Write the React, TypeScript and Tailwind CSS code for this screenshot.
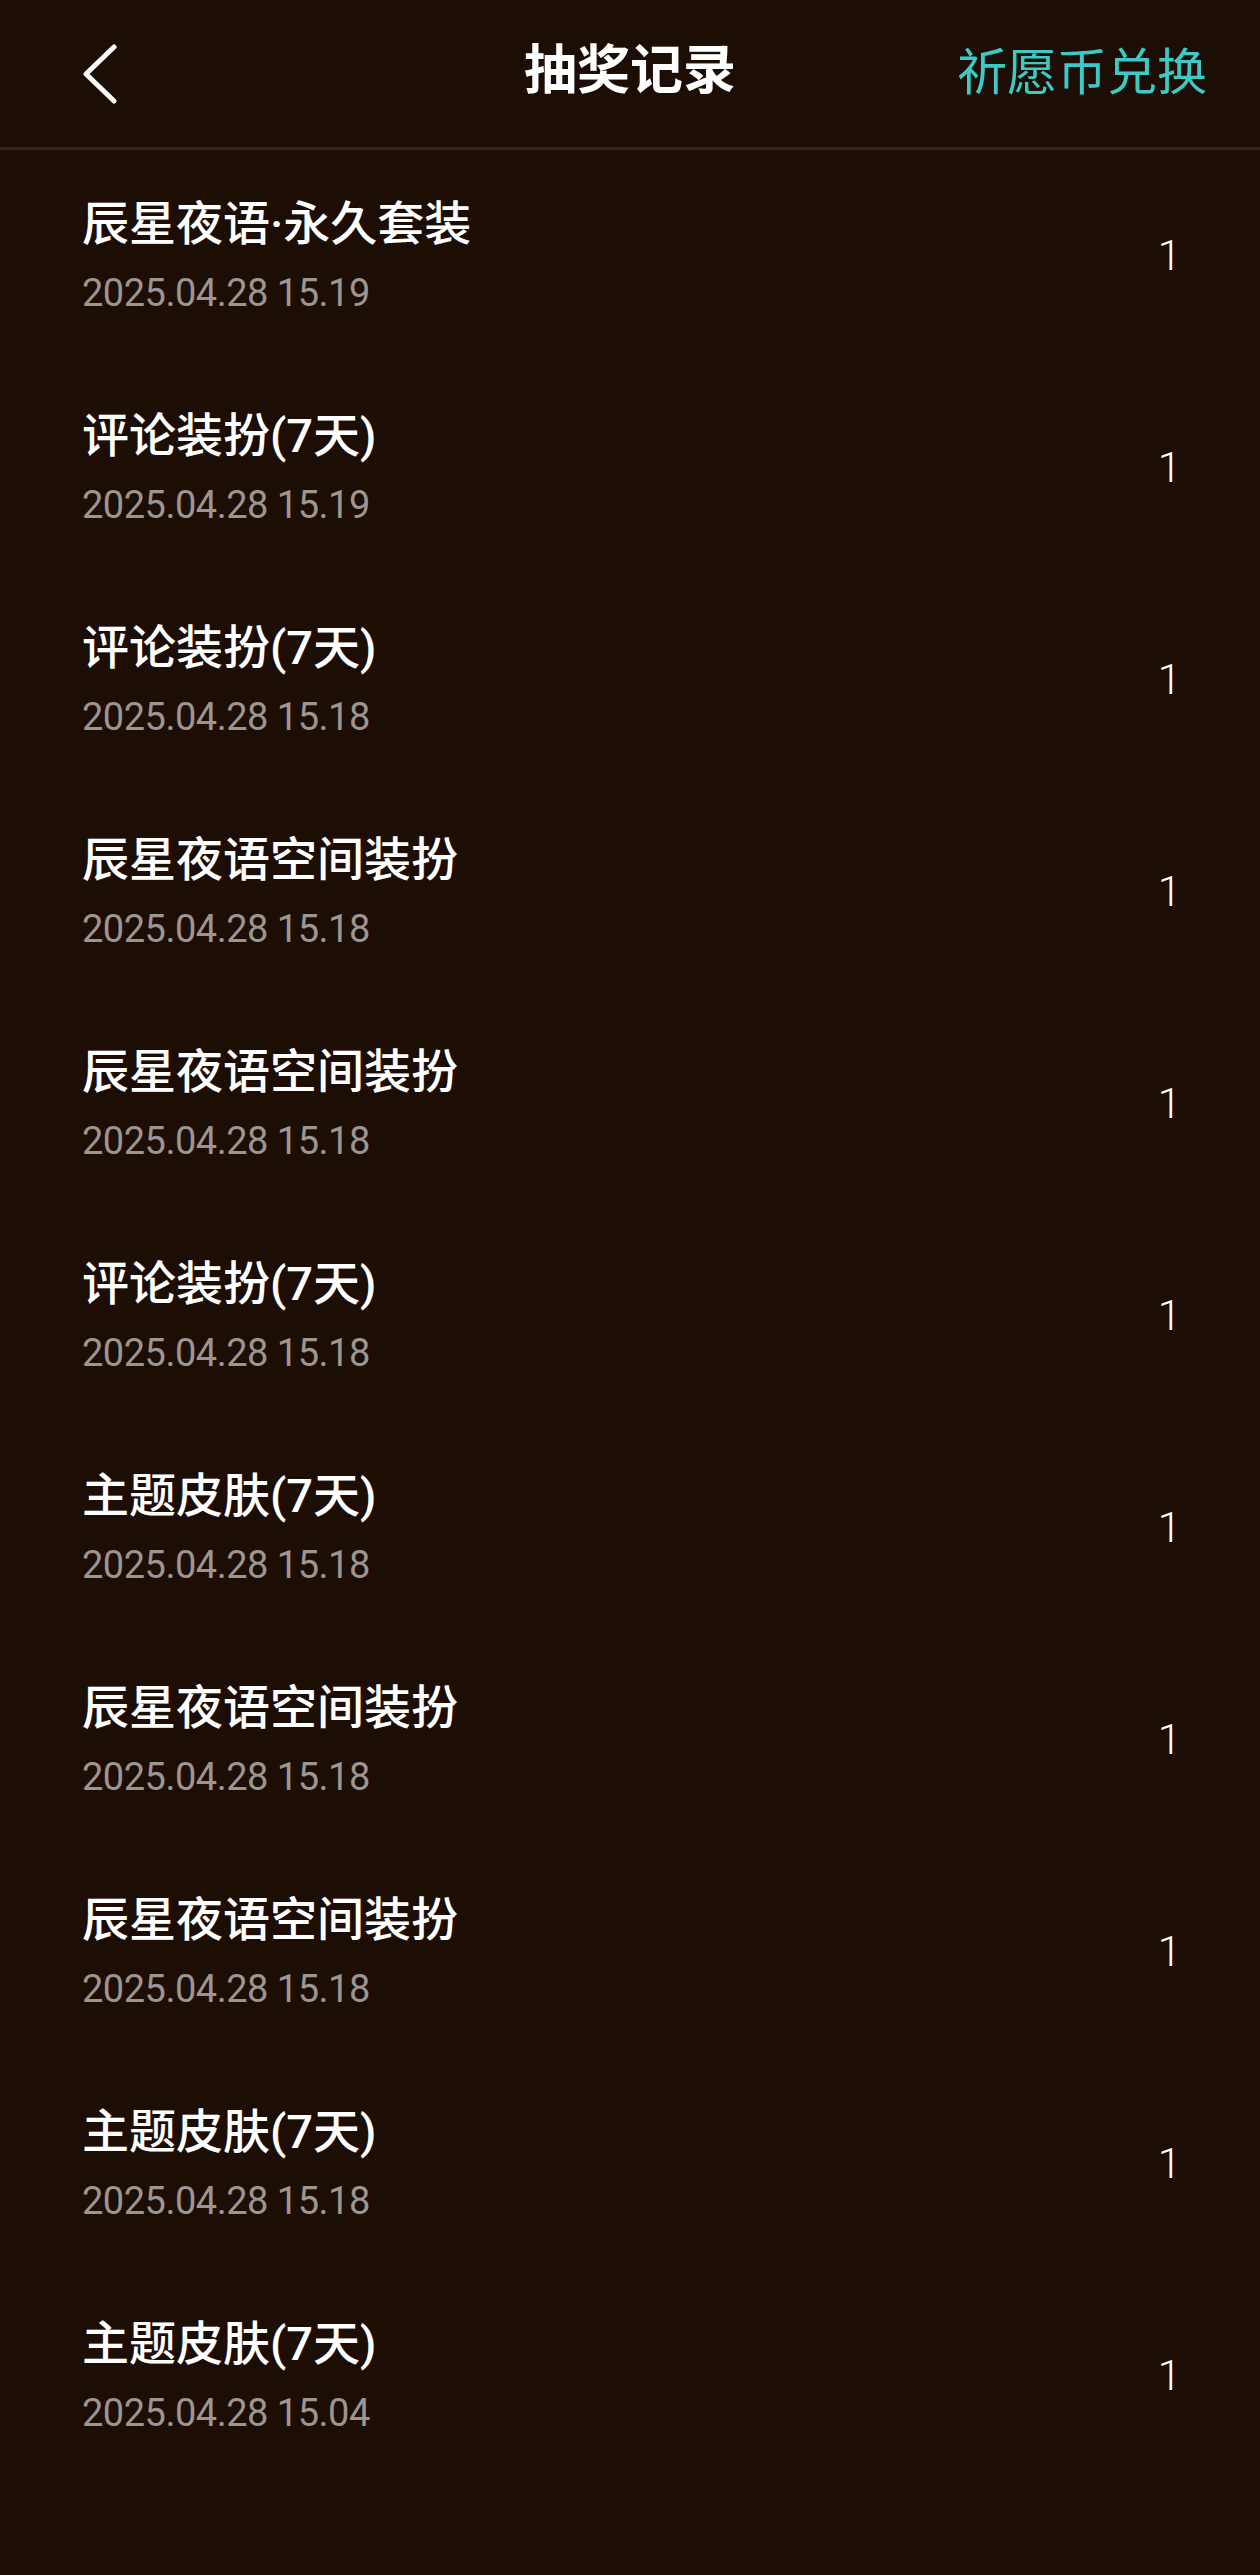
import React from "react";

const rows: { title: string; time: string }[] = [
  { title: "辰星夜语·永久套装", time: "2025.04.28 15.19" },
  { title: "评论装扮(7天)", time: "2025.04.28 15.19" },
  { title: "评论装扮(7天)", time: "2025.04.28 15.18" },
  { title: "辰星夜语空间装扮", time: "2025.04.28 15.18" },
  { title: "辰星夜语空间装扮", time: "2025.04.28 15.18" },
  { title: "评论装扮(7天)", time: "2025.04.28 15.18" },
  { title: "主题皮肤(7天)", time: "2025.04.28 15.18" },
  { title: "辰星夜语空间装扮", time: "2025.04.28 15.18" },
  { title: "辰星夜语空间装扮", time: "2025.04.28 15.18" },
  { title: "主题皮肤(7天)", time: "2025.04.28 15.18" },
  { title: "主题皮肤(7天)", time: "2025.04.28 15.04" },
];

const cjk = "font-['Roboto','Noto_Sans_CJK_SC',sans-serif]";

export default function App() {
  return (
    <div className={`w-[1260px] min-h-[2575px] bg-[#1c0e05] ${cjk}`}>
      <header className="grid h-[150px] grid-cols-[1fr_auto_1fr] items-center border-b-[3px] border-[#37271c]">
        <div className="pl-[82px]">
          <svg width="40" height="60" viewBox="0 0 40 60" className="block">
            <polyline
              points="32,3 4,30 32,57"
              fill="none"
              stroke="#ffffff"
              strokeWidth="5"
              strokeLinecap="round"
              strokeLinejoin="round"
            />
          </svg>
        </div>
        <div className="text-center text-[53px] font-bold leading-none text-white -mt-[4px]">
          抽奖记录
        </div>
        <div className="flex justify-end pr-[53px]">
          <span className="text-[50px] leading-none text-[#3ccac6] -mt-[2px]">祈愿币兑换</span>
        </div>
      </header>
      <main className="flex flex-col">
        {rows.map((r, i) => (
          <div key={i} className="flex h-[212px] items-center justify-between pl-[82px] pr-[79px]">
            <div className="flex flex-col gap-[16px] -mt-[3px]">
              <div className="text-[47px] leading-[60px] font-medium text-white">{r.title}</div>
              <div className="text-[38px] leading-[46px] tracking-[-0.5px] text-[#9d9591] font-['Roboto',sans-serif]">
                {r.time}
              </div>
            </div>
            <div className="text-[42px] leading-none font-light text-white">1</div>
          </div>
        ))}
      </main>
    </div>
  );
}
